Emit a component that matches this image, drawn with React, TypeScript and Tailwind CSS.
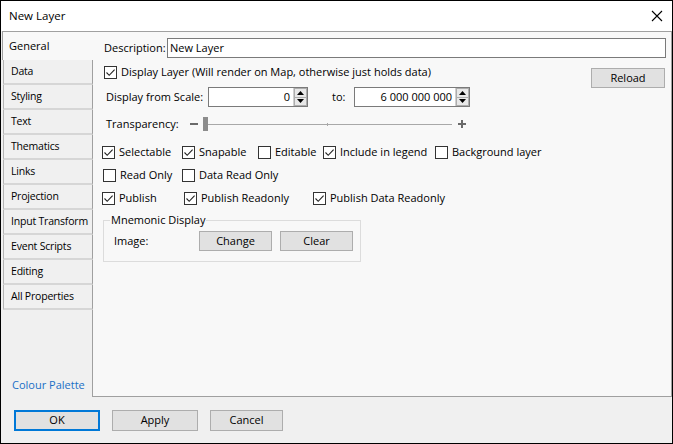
import React from "react";

const Check = () => (
  <svg width="11" height="11" viewBox="0 0 11 11">
    <path d="M1.5 5.5 L4.2 8.3 L9.6 2.6" fill="none" stroke="#222" strokeWidth="1.1" />
  </svg>
);

function Cb({ checked, label, className = "" }: { checked?: boolean; label: string; className?: string }) {
  return (
    <div className={"flex items-center h-[14px] " + className}>
      <span className="w-[13px] h-[13px] shrink-0 border border-[#333] bg-white flex items-center justify-center">
        {checked && <Check />}
      </span>
      <span className="ml-[4px] whitespace-nowrap leading-[14px]">{label}</span>
    </div>
  );
}

function Spin() {
  return (
    <div className="flex flex-col w-[14px] h-[18px] shrink-0 border-l border-[#d0d0d0]">
      <div className="flex-1 flex items-center justify-center bg-[#e8e8e8] border border-[#adadad]">
        <svg width="7" height="4" viewBox="0 0 7 4"><path d="M0 4 L3.5 0 L7 4 Z" fill="#000" /></svg>
      </div>
      <div className="flex-1 flex items-center justify-center bg-[#e8e8e8] border border-t-0 border-[#adadad]">
        <svg width="7" height="4" viewBox="0 0 7 4"><path d="M0 0 L3.5 4 L7 0 Z" fill="#000" /></svg>
      </div>
    </div>
  );
}

function Btn({ label, className = "" }: { label: string; className?: string }) {
  return (
    <div className={"flex items-center justify-center bg-[#e1e1e1] border border-[#adadad] " + className}>
      {label}
    </div>
  );
}

const tabs = [
  "Data",
  "Styling",
  "Text",
  "Thematics",
  "Links",
  "Projection",
  "Input Transform",
  "Event Scripts",
  "Editing",
  "All Properties",
];

export default function App() {
  return (
    <div
      className="w-[673px] h-[444px] border border-black flex flex-col text-[11px] text-black bg-[#f0f0f0] overflow-hidden"
      style={{ fontFamily: '"Open Sans", sans-serif' }}
    >
      {/* Title bar */}
      <div className="h-[30px] shrink-0 bg-white flex items-center pl-[8px] pr-[9px]">
        <span className="text-[11.5px] leading-[16px]">New Layer</span>
        <div className="ml-auto">
          <svg width="12" height="12" viewBox="0 0 12 12">
            <path d="M1 1 L11 11 M11 1 L1 11" stroke="#000" strokeWidth="1.1" />
          </svg>
        </div>
      </div>

      {/* Main */}
      <div className="h-[366px] shrink-0 flex">
        {/* Tab column */}
        <div className="w-[92px] shrink-0 flex flex-col">
          <div className="h-[29px] ml-px border-l border-t border-[#a0a0a0] bg-[#f8f8f8] flex items-center pl-[6px]">
            General
          </div>
          {tabs.map((t) => (
            <div
              key={t}
              className="h-[25px] ml-[2px] border-l border-[#b4b4b4] border-r border-r-[#a0a0a0] border-b-2 border-b-[#d6d6d6] bg-[#f0f0f0] flex items-center pl-[7px] whitespace-nowrap text-[10.5px] tracking-[-0.2px]"
            >
              {t}
            </div>
          ))}
          <div className="flex-1 border-r border-[#a0a0a0] flex items-end pl-[11px] pb-[4px]">
            <span className="text-[#1a6fc6] leading-[16px]">Colour Palette</span>
          </div>
        </div>

        {/* Panel */}
        <div className="flex-1 border-t border-r border-b border-[#a0a0a0] bg-[#f8f8f8] pl-[9px] pr-[5px] flex flex-col">
          {/* Description */}
          <div className="mt-[6px] h-[20px] flex items-center">
            <span className="ml-[2px] w-[63px] whitespace-nowrap">Description:</span>
            <div className="flex-1 h-[20px] border border-[#7a7a7a] bg-white flex items-center pl-[2px]">
              New Layer
            </div>
          </div>

          {/* Display layer + reload */}
          <div className="mt-[7px] h-[22px] flex items-start">
            <Cb checked label="Display Layer (Will render on Map, otherwise just holds data)" className="ml-[2px]" />
            <Btn label="Reload" className="ml-auto mr-px mt-[3px] w-[74px] h-[20px]" />
          </div>

          {/* Scale */}
          <div className="h-[20px] flex items-center">
            <span className="ml-[4px] w-[102px] whitespace-nowrap">Display from Scale:</span>
            <div className="w-[100px] h-[20px] border border-[#7a7a7a] bg-white flex items-center justify-end">
              <span className="mr-[3px]">0</span>
              <Spin />
            </div>
            <span className="ml-[24px] w-[22px]">to:</span>
            <div className="w-[116px] h-[20px] border border-[#7a7a7a] bg-white flex items-center justify-end">
              <span className="mr-[3px]">6 000 000 000</span>
              <Spin />
            </div>
          </div>

          {/* Transparency */}
          <div className="mt-[7px] h-[20px] flex items-center">
            <span className="ml-[4px] w-[84px] whitespace-nowrap">Transparency:</span>
            <div className="w-[8px] h-[2px] bg-[#6a6a6a]" />
            <div className="ml-[5px] w-[5px] h-[14px] bg-[#8c8c8c]" />
            <div className="relative w-[244px] h-px bg-[#a8a8a8]">
              <div className="absolute left-[119px] -top-[1px] w-px h-[3px] bg-[#a8a8a8]" />
            </div>
            <div className="ml-[6px] relative w-[8px] h-[8px]">
              <div className="absolute left-0 top-[3px] w-[8px] h-[2px] bg-[#6a6a6a]" />
              <div className="absolute left-[3px] top-0 w-[2px] h-[8px] bg-[#6a6a6a]" />
            </div>
          </div>

          {/* Row 1 */}
          <div className="mt-[11px] flex">
            <Cb checked label="Selectable" className="w-[80px]" />
            <Cb checked label="Snapable" className="w-[76px]" />
            <Cb label="Editable" className="w-[65px]" />
            <Cb checked label="Include in legend" className="w-[112px]" />
            <Cb label="Background layer" />
          </div>

          {/* Row 2 */}
          <div className="mt-[9px] flex ml-px">
            <Cb label="Read Only" className="w-[79px]" />
            <Cb label="Data Read Only" />
          </div>

          {/* Row 3 */}
          <div className="mt-[9px] flex">
            <Cb checked label="Publish" className="w-[82px]" />
            <Cb checked label="Publish Readonly" className="w-[129px]" />
            <Cb checked label="Publish Data Readonly" />
          </div>

          {/* Group box */}
          <fieldset className="mt-[7px] ml-px w-[258px] border border-[#dcdcdc] pl-[10px] pr-[6px] pb-[10px]">
            <legend className="-ml-[4px] px-px leading-[16px]">Mnemonic Display</legend>
            <div className="mt-[3px] flex items-center">
              <span className="w-[85px]">Image:</span>
              <Btn label="Change" className="w-[73px] h-[20px]" />
              <Btn label="Clear" className="ml-[8px] w-[73px] h-[20px]" />
            </div>
          </fieldset>
        </div>
      </div>

      {/* Bottom bar */}
      <div className="flex-1 flex items-start pl-[13px] pt-[13px]">
        <div className="w-[86px] h-[21px] bg-[#e1e1e1] border-2 border-[#0078d7] flex items-center justify-center">
          OK
        </div>
        <Btn label="Apply" className="ml-[12px] w-[86px] h-[21px]" />
        <Btn label="Cancel" className="ml-[12px] w-[73px] h-[21px]" />
      </div>
    </div>
  );
}
